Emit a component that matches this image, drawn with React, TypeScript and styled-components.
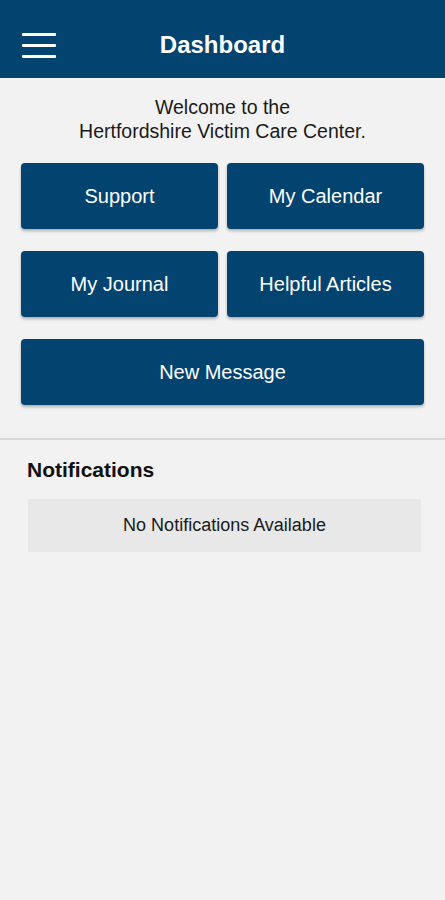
import React from "react";
import styled, {createGlobalStyle} from "styled-components";

const navy = '#03436f';

const GlobalStyle = createGlobalStyle`
  html, body {
	margin: 0;
	padding: 0;
	background: #f2f2f2;
	font-family: "Liberation Sans", Arial, Helvetica, sans-serif;
	-webkit-font-smoothing: antialiased;
  }
`;

const actions = [
	{label: 'Support'},
	{label: 'My Calendar'},
	{label: 'My Journal'},
	{label: 'Helpful Articles'},
	{label: 'New Message', wide: true},
];

export default function App() {
	return (
		<>
			<GlobalStyle/>
			<Screen>
				<Header>
					<MenuButton aria-label="Menu">
						<MenuBar/>
						<MenuBar/>
						<MenuBar/>
					</MenuButton>
					<Title>Dashboard</Title>
					<span/>
				</Header>

				<Welcome>
					Welcome to the
					<br/>
					Hertfordshire Victim Care Center.
				</Welcome>

				<ActionGrid>
					{actions.map((action) => (
						<ActionButton key={action.label} wide={action.wide}>
							{action.label}
						</ActionButton>
					))}
				</ActionGrid>

				<Divider/>

				<Notifications>
					<SectionTitle>Notifications</SectionTitle>
					<EmptyBox>No Notifications Available</EmptyBox>
				</Notifications>
			</Screen>
		</>
	);
}

const Screen = styled.div`
  min-height: 900px;
  background: #f2f2f2;
`;

const Header = styled.header`
  display: grid;
  grid-template-columns: 1fr auto 1fr;
  align-items: center;
  box-sizing: border-box;
  height: 78px;
  padding: 12px 22px 0;
  background: ${navy};
`;

const MenuButton = styled.div`
  display: flex;
  flex-direction: column;
  gap: 8px;
  width: 34px;
`;

const MenuBar = styled.span`
  display: block;
  height: 3px;
  border-radius: 1px;
  background: #ffffff;
`;

const Title = styled.h1`
  margin: 0;
  color: #ffffff;
  font-size: 24px;
  line-height: 28px;
  font-weight: 700;
`;

const Welcome = styled.p`
  margin: 0;
  padding-top: 17px;
  text-align: center;
  font-size: 19.5px;
  line-height: 24px;
  color: #1a1a1a;
`;

const ActionGrid = styled.div`
  display: grid;
  grid-template-columns: 1fr 1fr;
  column-gap: 9px;
  row-gap: 22px;
  padding: 20px 21px 0;
`;

const ActionButton = styled.div<{wide?: boolean}>`
  grid-column: ${(p) => (p.wide ? '1 / -1' : 'auto')};
  display: flex;
  align-items: center;
  justify-content: center;
  height: 66px;
  border-radius: 4px;
  background: ${navy};
  box-shadow: 0 2px 3px rgba(0, 0, 0, 0.28);
  color: #ffffff;
  font-size: 20px;
`;

const Divider = styled.hr`
  margin: 33px 0 0;
  border: 0;
  height: 2px;
  background: #d9d9d9;
`;

const Notifications = styled.section`
  padding: 18px 24px 0 27px;
`;

const SectionTitle = styled.h2`
  margin: 0;
  font-size: 21px;
  line-height: 24px;
  font-weight: 700;
  color: #111111;
`;

const EmptyBox = styled.div`
  display: flex;
  align-items: center;
  justify-content: center;
  height: 53px;
  margin: 17px 0 0 1px;
  background: #e8e8e8;
  color: #1a1a1a;
  font-size: 18px;
`;
